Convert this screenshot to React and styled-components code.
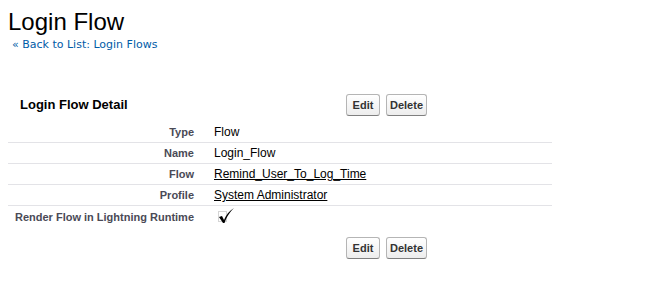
import React from 'react';
import styled, { createGlobalStyle } from 'styled-components';

const GlobalStyle = createGlobalStyle`
  body {
    margin: 0;
    background: #fff;
    font-family: Arial, "Liberation Sans", Helvetica, sans-serif;
    color: #222;
  }
`;

const Page = styled.div`
  padding: 8px 8px 0 8px;
`;

const Title = styled.h1`
  margin: 0;
  font-size: 24px;
  font-weight: normal;
  line-height: 28px;
  color: #000;
`;

const BackLink = styled.a`
  display: block;
  margin: 2px 0 0 4px;
  font-family: Verdana, "DejaVu Sans", sans-serif;
  font-size: 11px;
  line-height: 14px;
  color: #015ba7;
  text-decoration: none;
`;

const Detail = styled.div`
  width: 544px;
  margin-top: 41px;
`;

const ButtonRow = styled.div`
  display: flex;
  align-items: center;
  height: 23px;
`;

const SectionTitle = styled.h2`
  margin: 0;
  width: 326px;
  padding-left: 12px;
  font-size: 13px;
  font-weight: bold;
  color: #000;
`;

const Buttons = styled.div`
  display: flex;
  gap: 6px;
  padding-left: ${(p) => p.$offset}px;
`;

const Button = styled.button`
  height: 22px;
  min-width: 34px;
  padding: 0 3px;
  font-family: Arial, "Liberation Sans", sans-serif;
  font-size: 11px;
  font-weight: bold;
  color: #333;
  background: linear-gradient(#ffffff, #ededed);
  border: 1px solid #b5b5b5;
  border-bottom-color: #7f7f7f;
  border-radius: 3px;
`;

const Rows = styled.div`
  margin-top: 6px;
  margin-bottom: 9px;
`;

const Row = styled.div`
  box-sizing: border-box;
  display: grid;
  grid-template-columns: 196px 1fr;
  height: 21px;
  align-items: center;
  border-bottom: ${(p) => (p.$last ? 'none' : '1px solid #e3e3e7')};
`;

const Label = styled.div`
  text-align: right;
  padding-right: 10px;
  font-size: 11px;
  font-weight: bold;
  color: #4a4a56;
`;

const Value = styled.div`
  padding-left: 10px;
  font-size: 12px;
  color: #000;
`;

const ValueLink = styled.a`
  color: #000;
  text-decoration: underline;
`;

const Check = styled.span`
  display: inline-block;
  position: relative;
  top: 1px;
  margin-left: 3px;
`;

const CheckIcon = () => (
  <svg width="18" height="16" viewBox="0 0 18 16">
    <rect x="1.5" y="3.5" width="8" height="10" fill="none" stroke="#aaa" strokeWidth="1" strokeDasharray="1 1" />
    <path d="M2 9 L5 8 L7 12 C9 7 12 3 17 0 C13 4 10 8 7.5 15 L6 15 Z" fill="#000" />
  </svg>
);

const rows = [
  { label: 'Type', value: 'Flow' },
  { label: 'Name', value: 'Login_Flow' },
  { label: 'Flow', value: 'Remind_User_To_Log_Time', link: true },
  { label: 'Profile', value: 'System Administrator', link: true },
  { label: 'Render Flow in Lightning Runtime', check: true },
];

export default function App() {
  return (
    <>
      <GlobalStyle />
      <Page>
        <Title>Login Flow</Title>
        <BackLink href="#">« Back to List: Login Flows</BackLink>
        <Detail>
          <ButtonRow>
            <SectionTitle>Login Flow Detail</SectionTitle>
            <Buttons $offset={0}>
              <Button>Edit</Button>
              <Button>Delete</Button>
            </Buttons>
          </ButtonRow>
          <Rows>
            {rows.map((r, i) => (
              <Row key={r.label} $last={i === rows.length - 1}>
                <Label>{r.label}</Label>
                <Value>
                  {r.check ? (
                    <Check><CheckIcon /></Check>
                  ) : r.link ? (
                    <ValueLink href="#">{r.value}</ValueLink>
                  ) : (
                    r.value
                  )}
                </Value>
              </Row>
            ))}
          </Rows>
          <ButtonRow>
            <Buttons $offset={338}>
              <Button>Edit</Button>
              <Button>Delete</Button>
            </Buttons>
          </ButtonRow>
        </Detail>
      </Page>
    </>
  );
}
